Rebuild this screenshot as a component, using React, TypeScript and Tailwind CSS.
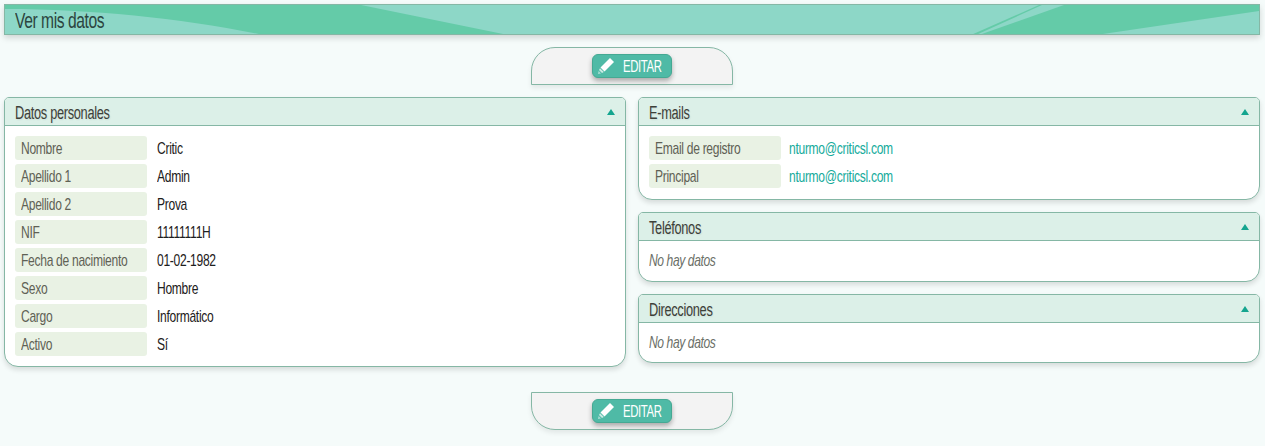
function Pencil() {
  return (
    <svg width="16" height="16" viewBox="0 0 16 16" className="shrink-0">
      <path d="M12 0 16 4 6.5 13.5 2.5 9.5z" fill="#fff" />
      <path d="M2 10.2 5.8 14 4 15 1 12z" fill="#fff" fillOpacity="0.7" />
      <path d="M0.6 13 3 15.4 0 16z" fill="#fff" fillOpacity="0.5" />
    </svg>
  );
}

// liberation sans squeezed, the screenshot font is a narrow one that isn't installed
function T({ children, className = "" }: { children: React.ReactNode; className?: string }) {
  return <span className={`inline-block origin-left scale-x-[0.71] whitespace-nowrap ${className}`}>{children}</span>;
}

function EditTab({ bottom }: { bottom?: boolean }) {
  return (
    <div className="flex justify-center">
      <div
        className={`flex h-[38px] w-[202px] justify-center border border-[#85b7a5] bg-[#f3f3f3] pt-[6px] shadow-[0_3px_5px_rgba(0,0,0,0.08)] ${
          bottom ? "rounded-b-[24px]" : "rounded-t-[24px]"
        }`}
      >
        <button className="flex h-6 w-20 items-center gap-[9px] rounded-md border border-[#45a993] bg-[#4fbaa6] pl-[5px] text-[16px] tracking-[-0.55px] text-white shadow-[0_3px_5px_rgba(0,0,0,0.3)]">
          <Pencil />
          <T className="pt-[1px]">EDITAR</T>
        </button>
      </div>
    </div>
  );
}

function Panel({ title, children, bodyClass }: { title: string; children: React.ReactNode; bodyClass?: string }) {
  return (
    <div className="rounded-t-[5px] rounded-b-[14px] border border-[#85b7a5] bg-white shadow-[0_3px_5px_rgba(0,0,0,0.12)]">
      <div className="flex h-[28px] items-center justify-between rounded-t-[4px] border-b border-[#85b7a5] bg-[#dcf0e8] px-[10px]">
        <T className="pt-[3px] text-[18px] tracking-[-0.42px] text-[#3d4039] [text-shadow:1px_1px_2px_rgba(0,0,0,0.08)]">{title}</T>
        <svg width="8" height="6" viewBox="0 0 8 6">
          <path d="M4 0 8 6H0z" fill="#14a58f" />
        </svg>
      </div>
      <div className={bodyClass}>{children}</div>
    </div>
  );
}

function Row({ label, value, link }: { label: string; value: string; link?: boolean }) {
  return (
    <div className="flex h-6 items-center">
      <div className="flex h-6 w-[132px] items-center rounded-[3px] bg-[#e9f2e4] pl-[6px] text-[#5f6155]">
        <T className="pt-[1px]">{label}</T>
      </div>
      <div className={link ? "ml-2 pt-[1px] text-[#16ab9c]" : "ml-[10px] pt-[1px] text-[#1d2020]"}>
        <T>{value}</T>
      </div>
    </div>
  );
}

function Empty() {
  return (
    <div className="text-[17px] leading-[20px] tracking-[-0.55px] italic text-[#6b6f68]">
      <T>No hay datos</T>
    </div>
  );
}

const personal = [
  ["Nombre", "Critic"],
  ["Apellido 1", "Admin"],
  ["Apellido 2", "Prova"],
  ["NIF", "11111111H"],
  ["Fecha de nacimiento", "01-02-1982"],
  ["Sexo", "Hombre"],
  ["Cargo", "Informático"],
  ["Activo", "Sí"],
];

export default function App() {
  return (
    <div className="min-h-[446px] bg-[#f5fbfa] pt-1 pb-1 pl-1 pr-[5px] font-['Liberation_Sans',sans-serif] text-[17px] tracking-[-0.42px]">
      <div className="relative h-[31px] overflow-hidden border border-[#85b7a5] bg-[#8dd7c7] shadow-[0_3px_6px_rgba(0,0,0,0.15)]">
        <svg className="absolute inset-0" width="1254" height="30" viewBox="0 0 1254 30">
          <path d="M0 0H356L503 30H259C180 14 90 4 0 4z" fill="#64cba8" />
          <path d="M1059 0H1254V6L1091 30H974z" fill="#64cba8" />
          <path d="M1034 0H1037L971 30H966z" fill="#64cba8" />
        </svg>
        <h1 className="relative pl-[10px] text-[22px] leading-[31px] tracking-[-0.6px] text-[#2c4540]">
          <T>Ver mis datos</T>
        </h1>
      </div>

      <div className="mt-3">
        <EditTab />
      </div>

      <div className="mt-3 grid grid-cols-2 items-start gap-3">
        <Panel title="Datos personales" bodyClass="flex flex-col gap-1 p-[10px]">
          {personal.map(([label, value]) => (
            <Row key={label} label={label} value={value} />
          ))}
        </Panel>
        <div className="flex flex-col gap-3">
          <Panel title="E-mails" bodyClass="flex flex-col gap-1 px-[10px] pt-[10px] pb-[11px]">
            <Row label="Email de registro" value="nturmo@criticsl.com" link />
            <Row label="Principal" value="nturmo@criticsl.com" link />
          </Panel>
          <Panel title="Teléfonos" bodyClass="p-[10px]">
            <Empty />
          </Panel>
          <Panel title="Direcciones" bodyClass="px-[10px] pt-[10px] pb-[9px]">
            <Empty />
          </Panel>
        </div>
      </div>

      <div className="mt-[25px]">
        <EditTab bottom />
      </div>
    </div>
  );
}
